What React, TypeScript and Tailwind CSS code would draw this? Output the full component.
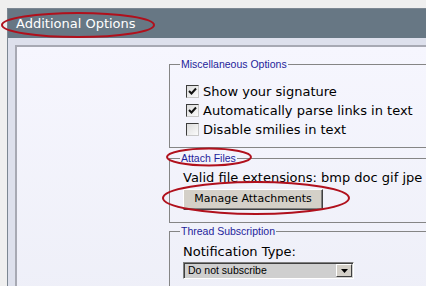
import type { ReactNode } from 'react'

const verdana = { fontFamily: "'DejaVu Sans', Verdana, sans-serif" }

function Legend({ children }: { children: ReactNode }) {
  return (
    <legend className="px-[1px] text-[10.5px] leading-[12px] text-[#1e1e9a] font-['Liberation_Sans',Arial,sans-serif]">
      {children}
    </legend>
  )
}

function Check({ checked, label }: { checked?: boolean; label: string }) {
  return (
    <label className="flex h-[19px] items-center gap-[4px]">
      <span className="flex h-[13px] w-[13px] items-center justify-center border border-t-[#3c3c3c] border-l-[#3c3c3c] border-b-[#c8c8c8] border-r-[#c8c8c8] bg-gradient-to-br from-[#dcdcdc] to-[#fbfbfb]">
        {checked && (
          <svg width="9" height="9" viewBox="0 0 9 9">
            <path d="M1 4 L3.5 6.5 L8 1.5" fill="none" stroke="#111" strokeWidth="2" />
          </svg>
        )}
      </span>
      <span className="text-[13px] leading-[19px] text-black">{label}</span>
    </label>
  )
}

export default function App() {
  return (
    <div className="h-[286px] w-[426px] overflow-hidden bg-[#efefef] pl-[7px] pt-[8px]" style={verdana}>
      <div className="w-[520px] border-l border-t border-[#7c8792]">
        <div className="flex h-[29px] items-center bg-[#677784] pl-[8px] text-[13px] text-white">Additional Options</div>
        <div className="bg-[#dde0ec] pl-[7px] pt-[7px]">
          <div className="h-[260px] border-l-2 border-t-2 border-[#a7a9b3] bg-gradient-to-b from-[#f6f6fe] to-[#eeeff8] pl-[152px] pt-[11px]">
            <fieldset className="w-[300px] border border-[#858585] pb-[8px] pl-[10px]">
              <Legend>Miscellaneous Options</Legend>
              <div className="ml-[6px] mt-[12px]">
                <Check checked label="Show your signature" />
                <Check checked label="Automatically parse links in text" />
                <Check label="Disable smilies in text" />
              </div>
            </fieldset>

            <fieldset className="mt-[4px] w-[300px] border border-[#858585] pb-[12px] pl-[10px]">
              <Legend>Attach Files</Legend>
              <div className="ml-[3px] mt-[6px]">
                <p className="h-[16px] whitespace-nowrap text-[13px] leading-[16px] text-black">
                  Valid file extensions: bmp doc gif jpe
                </p>
                <button className="mt-[3px] flex h-[21px] w-[140px] items-center justify-center border border-t-white border-l-white border-b-[#404040] border-r-[#404040] bg-[#d4d0c8] text-[11px] text-black shadow-[inset_-1px_-1px_0_#808080]">
                  Manage Attachments
                </button>
              </div>
            </fieldset>

            <fieldset className="mt-[2px] w-[300px] border border-[#858585] pb-[12px] pl-[10px]">
              <Legend>Thread Subscription</Legend>
              <div className="ml-[3px] mt-[7px]">
                <p className="h-[16px] text-[13px] leading-[16px] text-black">Notification Type:</p>
                <div className="mt-[2px] flex h-[17px] w-[171px] items-center justify-between border border-t-[#808080] border-l-[#808080] border-b-white border-r-white bg-[#cfcfcf] pl-[4px] pr-[1px] shadow-[inset_1px_1px_0_#404040]">
                  <span className="text-[10.5px] leading-[13px] text-black font-['Liberation_Sans',Arial,sans-serif]">Do not subscribe</span>
                  <span className="flex h-[13px] w-[16px] items-center justify-center border border-t-white border-l-white border-b-[#404040] border-r-[#404040] bg-[#d4d0c8]">
                    <svg width="7" height="4" viewBox="0 0 7 4">
                      <path d="M0 0 H7 L3.5 4 Z" fill="#000" />
                    </svg>
                  </span>
                </div>
              </div>
            </fieldset>
          </div>
        </div>
      </div>

      <svg className="pointer-events-none absolute left-0 top-0" width="426" height="286">
        <g fill="none" stroke="#b0101c" strokeWidth="2">
          <ellipse cx="78" cy="25" rx="76" ry="12" />
          <ellipse cx="209" cy="157" rx="42" ry="8.5" />
          <ellipse cx="256" cy="198" rx="93" ry="16" />
        </g>
      </svg>
    </div>
  )
}
